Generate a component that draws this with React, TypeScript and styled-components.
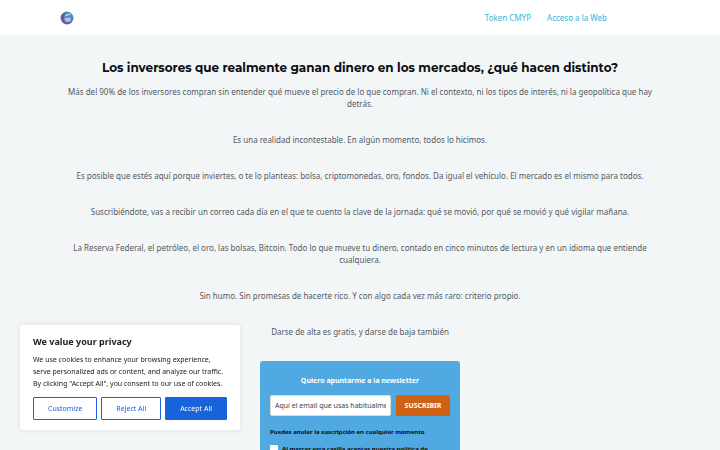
import React from "react";
import styled, { createGlobalStyle } from "styled-components";

const GlobalStyle = createGlobalStyle`
  *, *::before, *::after { box-sizing: border-box; }
  body {
    margin: 0;
    background: #f2f6f7;
    color: #54595f;
    font-family: "Noto Sans", "Open Sans", sans-serif;
    font-size: 8px;
    line-height: 12px;
    overflow: hidden;
  }
  button, input { font: inherit; }
`;

const Header = styled.header`
  display: flex;
  align-items: center;
  justify-content: space-between;
  height: 36px;
  padding: 0 calc(50% - 300px);
  background: #ffffff;
  border-bottom: 1px solid #f4f7f8;
`;

const HomeLink = styled.a`
  display: flex;
`;

const Nav = styled.nav`
  display: flex;
  gap: 16px;
  padding-right: 53px;
`;

const NavLink = styled.a`
  color: #34b3dc;
  text-decoration: none;
`;

const Main = styled.main`
  display: flex;
  flex-direction: column;
  align-items: center;
  max-width: 600px;
  margin: 0 auto;
  padding-top: 23px;
`;

const Title = styled.h1`
  margin: 0 0 10px;
  color: #0b0c12;
  font-family: Montserrat, Inter, sans-serif;
  font-size: 12px;
  font-weight: 700;
  line-height: 17px;
  text-align: center;
`;

const Copy = styled.div`
  display: flex;
  flex-direction: column;
  gap: 24px;
  padding: 0 5px;
  margin-bottom: 23px;
  text-align: center;
`;

const Paragraph = styled.p`
  margin: 0;
`;

const SignUp = styled.form`
  display: flex;
  flex-direction: column;
  width: 200px;
  padding: 14px 10px;
  border-radius: 3px;
  background: #50a9e0;
  color: #0a0c14;
  font-size: 6px;
  font-weight: 700;
`;

const SignUpTitle = styled.h2`
  margin: 0 0 8px;
  color: #ffffff;
  font-size: 7px;
  line-height: 12px;
  text-align: center;
`;

const FieldRow = styled.div`
  display: flex;
  gap: 5px;
  margin-bottom: 10px;
`;

const EmailInput = styled.input`
  flex: 1;
  min-width: 0;
  height: 21px;
  padding: 0 4px;
  border: 1px solid #dcdcdc;
  border-radius: 2px;
  background: #ffffff;
  font-size: 7px;
  font-weight: 400;
  &::placeholder { color: #444444; opacity: 1; }
`;

const SubmitButton = styled.button`
  width: 54px;
  padding: 0;
  border: 0;
  border-radius: 2px;
  background: #cd6214;
  color: #ffffff;
  font-size: 7px;
  font-weight: 700;
`;

const Note = styled.p`
  margin: 0 0 5px;
`;

const ConsentLabel = styled.label`
  display: flex;
  align-items: flex-start;
  gap: 4px;
`;

const ConsentBox = styled.input`
  appearance: none;
  flex: none;
  width: 8px;
  height: 8px;
  margin: 2px 0 0;
  border-radius: 1px;
  background: #ffffff;
  &:checked { background: #1863dc; }
`;

const Privacy = styled.section`
  position: fixed;
  left: 20px;
  bottom: 20px;
  width: 220px;
  padding: 11px 13px 10px;
  border-radius: 3px;
  background: #ffffff;
  box-shadow: 0 0 5px #acabab4d;
  color: #212121;
  font-size: 7px;
`;

const PrivacyTitle = styled.h2`
  margin: 0 0 6px;
  font-size: 9px;
  line-height: 12px;
`;

const PrivacyText = styled.p`
  margin: 0 0 7px;
`;

const ButtonRow = styled.div`
  display: flex;
  gap: 4px;
`;

const PrivacyButton = styled.button<{ $primary?: boolean }>`
  flex: auto;
  height: 23px;
  padding: 0 13px;
  border: 1px solid #1863dc;
  border-radius: 1px;
  background: ${(p) => (p.$primary ? "#1863dc" : "transparent")};
  color: ${(p) => (p.$primary ? "#ffffff" : "#1863dc")};
  white-space: nowrap;
`;

const Logo = () => (
  <svg width="14" height="14" viewBox="0 0 28 28" aria-hidden="true">
    <defs>
      <linearGradient id="disc" x1="0" y1="1" x2="1" y2="0">
        <stop offset="0" stopColor="#7654ac" />
        <stop offset="0.5" stopColor="#536fae" />
        <stop offset="1" stopColor="#35bed2" />
      </linearGradient>
    </defs>
    <circle cx="14" cy="14" r="13" fill="url(#disc)" />
    <path d="M9 10 L13 6 L20 5 L21 8 L15 9 L11 12 Z" fill="#a3dce9" />
    <path d="M8 14 L21 12 L22 20 L18 22 L9 21 Z" fill="#aaa9e0" />
    <path d="M4 10 L10 6 L7 13 L10 22 L5 19 Z" fill="#5a56a2" />
    <path d="M12 16 H20 M12 19 H19" stroke="#d3d9f2" strokeWidth="1.5" />
  </svg>
);

const paragraphs = [
  "Más del 90% de los inversores compran sin entender qué mueve el precio de lo que compran. Ni el contexto, ni los tipos de interés, ni la geopolítica que hay detrás.",
  "Es una realidad incontestable. En algún momento, todos lo hicimos.",
  "Es posible que estés aquí porque inviertes, o te lo planteas: bolsa, criptomonedas, oro, fondos. Da igual el vehículo. El mercado es el mismo para todos.",
  "Suscribiéndote, vas a recibir un correo cada día en el que te cuento la clave de la jornada: qué se movió, por qué se movió y qué vigilar mañana.",
  "La Reserva Federal, el petróleo, el oro, las bolsas, Bitcoin. Todo lo que mueve tu dinero, contado en cinco minutos de lectura y en un idioma que entiende cualquiera.",
  "Sin humo. Sin promesas de hacerte rico. Y con algo cada vez más raro: criterio propio.",
  "Darse de alta es gratis, y darse de baja también",
];

export default function App() {
  return (
    <>
      <GlobalStyle />
      <Header>
        <HomeLink href="#" aria-label="CMYP">
          <Logo />
        </HomeLink>
        <Nav>
          <NavLink href="#token">Token CMYP</NavLink>
          <NavLink href="#acceso">Acceso a la Web</NavLink>
        </Nav>
      </Header>
      <Main>
        <Title>Los inversores que realmente ganan dinero en los mercados, ¿qué hacen distinto?</Title>
        <Copy>
          {paragraphs.map((text) => (
            <Paragraph key={text}>{text}</Paragraph>
          ))}
        </Copy>
        <SignUp onSubmit={(e) => e.preventDefault()}>
          <SignUpTitle>Quiero apuntarme a la newsletter</SignUpTitle>
          <FieldRow>
            <EmailInput type="email" aria-label="Email" placeholder="Aquí el email que usas habitualmente" />
            <SubmitButton type="submit">SUSCRIBIR</SubmitButton>
          </FieldRow>
          <Note>Puedes anular la suscripción en cualquier momento</Note>
          <ConsentLabel>
            <ConsentBox type="checkbox" />
            <span>Al marcar esta casilla aceptas nuestra política de privacidad</span>
          </ConsentLabel>
        </SignUp>
      </Main>
      <Privacy aria-labelledby="privacy-title">
        <PrivacyTitle id="privacy-title">We value your privacy</PrivacyTitle>
        <PrivacyText>
          We use cookies to enhance your browsing experience, serve personalized ads or content, and analyze our
          traffic. By clicking "Accept All", you consent to our use of cookies.
        </PrivacyText>
        <ButtonRow>
          <PrivacyButton type="button">Customize</PrivacyButton>
          <PrivacyButton type="button">Reject All</PrivacyButton>
          <PrivacyButton type="button" $primary>Accept All</PrivacyButton>
        </ButtonRow>
      </Privacy>
    </>
  );
}
